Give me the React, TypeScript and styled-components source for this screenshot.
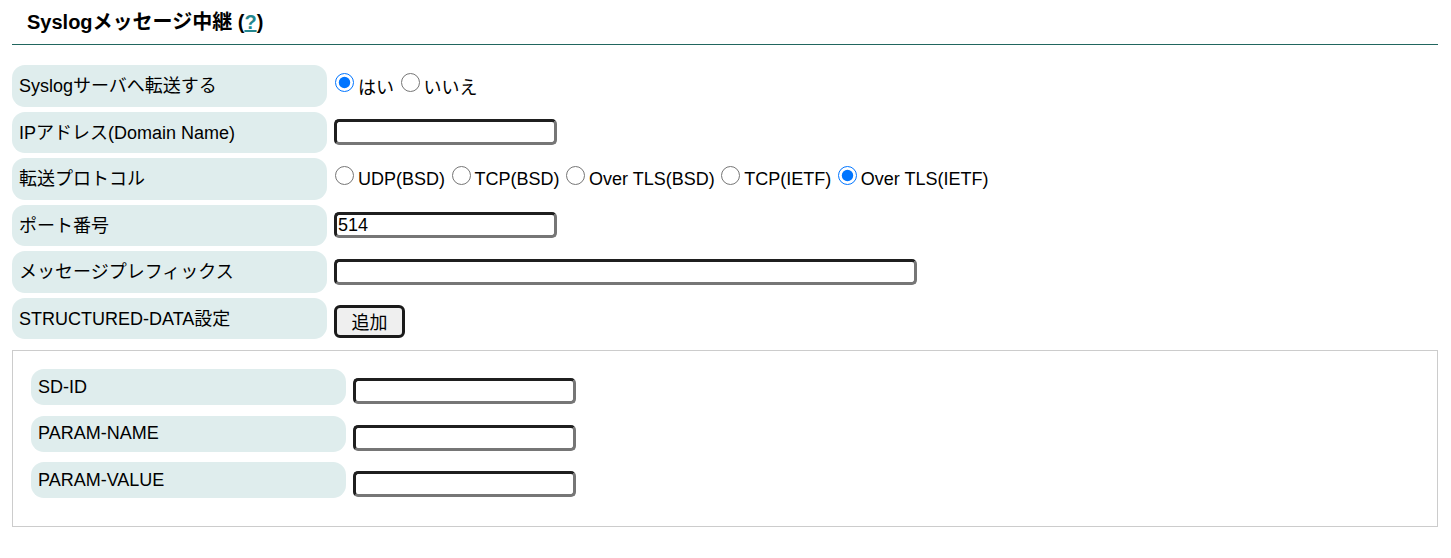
import React from "react";
import styled, { createGlobalStyle } from "styled-components";

const GlobalStyle = createGlobalStyle`
  html, body {
    margin: 0;
    padding: 0;
    background: #ffffff;
  }
  body {
    font-family: "Liberation Sans", Arial, "Noto Sans CJK JP", sans-serif;
    color: #000000;
  }
`;

const Page = styled.div`
  padding: 0 13px 0 12px;
`;

const Heading = styled.h2`
  margin: 0;
  padding: 10px 0 10px 15px;
  font-size: 20px;
  line-height: 24px;
  font-weight: bold;
  border-bottom: 1.5px solid #21665f;
`;

const HelpLink = styled.a`
  color: #24868e;
  text-decoration: underline;
`;

const Form = styled.div`
  margin-top: 20px;
  display: grid;
  grid-template-columns: 314.5px 1fr;
  grid-auto-rows: 41.5px;
  column-gap: 7.5px;
  row-gap: 5px;
`;

const LabelCell = styled.div<{ $h?: number; $lift?: number }>`
  display: flex;
  align-items: center;
  box-sizing: border-box;
  height: ${(p) => (p.$h ? `${p.$h}px` : "auto")};
  padding: 0 0 ${(p) => p.$lift ?? 0}px 7px;
  background: #dfeded;
  border-radius: 13px;
  font-size: 18px;
  white-space: nowrap;
`;

const ValueCell = styled.div<{ $top?: boolean }>`
  display: flex;
  align-items: ${(p) => (p.$top ? "flex-start" : "center")};
  font-size: 18px;
  white-space: nowrap;
`;

const Radio = styled.input.attrs({ type: "radio" })`
  width: 19px;
  height: 19px;
  margin: 0 4px 6px 1px;
  flex: none;
`;

const RadioText = styled.span`
  margin-right: 5.5px;
  padding-top: 1px;
`;

const TextInput = styled.input.attrs({ type: "text" })<{ $w?: number; $mt?: number }>`
  box-sizing: border-box;
  width: ${(p) => p.$w ?? 223}px;
  height: 26px;
  margin: ${(p) => p.$mt ?? 0}px 0 0 0;
  padding: 0 1px;
  border: 3px solid;
  border-color: #1f1f1f #767676 #767676 #1f1f1f;
  border-radius: 5px;
  font-family: "Liberation Sans", Arial, sans-serif;
  font-size: 18px;
  color: #000;
  background: #fff;
  outline: none;
`;

const Button = styled.button`
  box-sizing: border-box;
  width: 71px;
  height: 33px;
  margin-top: 6px;
  border: 3px solid #1a1a1a;
  border-radius: 6px;
  background: #efefef;
  font-family: "Liberation Sans", Arial, "Noto Sans CJK JP", sans-serif;
  font-size: 18px;
  color: #000;
  padding: 0;
`;

const SubBox = styled.div`
  margin-top: 11px;
  border: 1px solid #cccccc;
  padding: 18px 0 28px 18px;
`;

const SubGrid = styled.div`
  display: grid;
  grid-template-columns: 315px 1fr;
  column-gap: 7px;
  row-gap: 10.5px;
`;

const protocols = [
  { label: "UDP(BSD)", checked: false },
  { label: "TCP(BSD)", checked: false },
  { label: "Over TLS(BSD)", checked: false },
  { label: "TCP(IETF)", checked: false },
  { label: "Over TLS(IETF)", checked: true },
];

const sdFields = ["SD-ID", "PARAM-NAME", "PARAM-VALUE"];

export default function App() {
  return (
    <>
      <GlobalStyle />
      <Page>
        <Heading>
          Syslogメッセージ中継 (<HelpLink href="#">?</HelpLink>)
        </Heading>
        <Form>
          <LabelCell $lift={3}>Syslogサーバへ転送する</LabelCell>
          <ValueCell>
            <Radio name="fwd" defaultChecked />
            <RadioText>はい</RadioText>
            <Radio name="fwd" />
            <RadioText>いいえ</RadioText>
          </ValueCell>

          <LabelCell $lift={3}>IPアドレス(Domain Name)</LabelCell>
          <ValueCell>
            <TextInput />
          </ValueCell>

          <LabelCell $lift={3}>転送プロトコル</LabelCell>
          <ValueCell>
            {protocols.map((p) => (
              <React.Fragment key={p.label}>
                <Radio name="proto" defaultChecked={p.checked} />
                <RadioText>{p.label}</RadioText>
              </React.Fragment>
            ))}
          </ValueCell>

          <LabelCell $lift={3}>ポート番号</LabelCell>
          <ValueCell>
            <TextInput defaultValue="514" />
          </ValueCell>

          <LabelCell $lift={3}>メッセージプレフィックス</LabelCell>
          <ValueCell>
            <TextInput $w={583} />
          </ValueCell>

          <LabelCell $lift={3}>STRUCTURED-DATA設定</LabelCell>
          <ValueCell>
            <Button>追加</Button>
          </ValueCell>
        </Form>

        <SubBox>
          <SubGrid>
            {sdFields.map((f) => (
              <React.Fragment key={f}>
                <LabelCell $h={36}>{f}</LabelCell>
                <ValueCell $top>
                  <TextInput $mt={9} />
                </ValueCell>
              </React.Fragment>
            ))}
          </SubGrid>
        </SubBox>
      </Page>
    </>
  );
}
